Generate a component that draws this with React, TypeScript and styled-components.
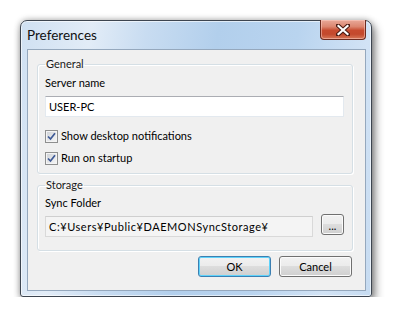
import React from "react";
import styled, { createGlobalStyle } from "styled-components";

const Global = createGlobalStyle`
  body {
    margin: 0;
    background: #ffffff;
    font-family: Lato, "Noto Sans", sans-serif;
  }
`;

const Window = styled.div`
  margin: 20px 0 0 20px;
  width: 352px;
  height: 277px;
  box-sizing: border-box;
  border: 1px solid #3d4550;
  border-radius: 7px 7px 3px 3px;
  background: linear-gradient(
    100deg,
    #cfe0f2 0%,
    #e2ecf7 18%,
    #c8dcf1 32%,
    #b2cfec 50%,
    #b9d4ef 70%,
    #d2e3f5 88%,
    #c6dbf1 100%
  );
  box-shadow: 3px 5px 10px rgba(0, 0, 0, 0.45), 0 0 6px rgba(0, 0, 0, 0.3),
    inset 0 0 0 1px rgba(255, 255, 255, 0.6);
  display: flex;
  flex-direction: column;
`;

const TitleBar = styled.div`
  height: 28px;
  display: flex;
  align-items: flex-start;
  padding-left: 6px;
`;

const Title = styled.div`
  font-size: 13.5px;
  line-height: 28px;
  color: #111;
`;

const CloseButton = styled.div`
  margin: -1px 5px 0 auto;
  width: 46px;
  height: 20px;
  box-sizing: border-box;
  border: 1px solid #6b2a1f;
  border-top: none;
  border-radius: 0 0 4px 4px;
  background: linear-gradient(
    #e9a999 0%,
    #dc8670 35%,
    #c74a2e 55%,
    #c3492d 75%,
    #d77859 100%
  );
  box-shadow: inset 0 0 0 1px rgba(255, 210, 200, 0.5);
  display: flex;
  align-items: center;
  justify-content: center;
`;

const Client = styled.div`
  flex: 1;
  margin: 0 5px 5px 6px;
  border: 1px solid #95a8bd;
  background: #f0f0f0;
  padding: 6px 12px 13px 9px;
  display: flex;
  flex-direction: column;
`;

const Group = styled.fieldset<{ $bottom: number }>`
  margin: 0;
  min-width: 0;
  border: 1px solid #d5dfe5;
  border-radius: 3px;
  box-shadow: inset 1px 1px 0 #ffffff, 1px 1px 0 #ffffff;
  padding: 0 8px ${(p) => p.$bottom}px 7px;
  display: flex;
  flex-direction: column;
  & + & {
    margin-top: 3px;
  }
`;

const Legend = styled.legend`
  padding: 0 1px;
  font-size: 11px;
  line-height: 16px;
  color: #1a1a1a;
`;

const Label = styled.div<{ $top: number }>`
  margin-top: ${(p) => p.$top}px;
  font-size: 11px;
  line-height: 16px;
  color: #000;
`;

const TextBox = styled.div<{ $readOnly?: boolean }>`
  height: 21px;
  box-sizing: border-box;
  margin-top: 4px;
  border: 1px solid ${(p) => (p.$readOnly ? "#d9d9d9" : "#e3e9ef")};
  border-top-color: ${(p) => (p.$readOnly ? "#cfcfcf" : "#abadb3")};
  background: ${(p) => (p.$readOnly ? "#f4f4f4" : "#ffffff")};
  padding: 0 3px;
  font-size: 11px;
  line-height: 19px;
  letter-spacing: ${(p) => (p.$readOnly ? "0.55px" : "0")};
  color: #000;
  white-space: nowrap;
  overflow: hidden;
  flex: 1;
`;

const CheckRow = styled.div<{ $top: number }>`
  margin-top: ${(p) => p.$top}px;
  display: flex;
  align-items: center;
  gap: 3px;
  font-size: 11px;
  line-height: 16px;
  color: #000;
`;

const Box = styled.span`
  width: 13px;
  height: 13px;
  box-sizing: border-box;
  border: 1px solid #8e8f8f;
  background: linear-gradient(135deg, #cbcfd5 0%, #e8e9eb 60%, #f6f6f6 100%);
  box-shadow: inset 0 0 0 1px #f4f4f4;
  display: flex;
  align-items: center;
  justify-content: center;
`;

const FolderRow = styled.div`
  display: flex;
  align-items: center;
  gap: 8px;
  margin-top: 1px;
`;

const Button = styled.div<{ $default?: boolean; $w: number }>`
  width: ${(p) => p.$w}px;
  height: 21px;
  box-sizing: border-box;
  border: 1px solid ${(p) => (p.$default ? "#3c7fb1" : "#707070")};
  border-radius: 3px;
  background: linear-gradient(#f2f2f2 0%, #ebebeb 50%, #dddddd 50%, #cfcfcf 100%);
  box-shadow: inset 0 0 0 1px
    ${(p) => (p.$default ? "#5fd3fb" : "#fbfbfb")};
  font-size: 11px;
  line-height: 19px;
  text-align: center;
  color: #000;
`;

const BrowseButton = styled(Button)`
  line-height: 22px;
  flex: none;
`;

const Buttons = styled.div`
  margin-top: auto;
  display: flex;
  justify-content: flex-end;
  gap: 8px;
  padding-right: 1px;
`;

const Check = () => (
  <svg width="9" height="9" viewBox="0 0 9 9">
    <path d="M1 4.5 L3.5 7 L8 1.2" fill="none" stroke="#3e5a96" strokeWidth="1.7" />
  </svg>
);

const CloseGlyph = () => (
  <svg width="14" height="12" viewBox="0 0 14 12">
    <path d="M2 1.5 L12 10.5 M12 1.5 L2 10.5" stroke="#4a1a12" strokeWidth="4.2" strokeLinecap="square" />
    <path d="M2.5 2 L11.5 10 M11.5 2 L2.5 10" stroke="#ffffff" strokeWidth="2.2" strokeLinecap="square" />
  </svg>
);

export default function App() {
  return (
    <>
      <Global />
      <Window>
        <TitleBar>
          <Title>Preferences</Title>
          <CloseButton>
            <CloseGlyph />
          </CloseButton>
        </TitleBar>
        <Client>
          <Group $bottom={7}>
            <Legend>General</Legend>
            <Label $top={3}>Server name</Label>
            <FolderRow>
              <TextBox>USER-PC</TextBox>
            </FolderRow>
            <CheckRow $top={11}>
              <Box>
                <Check />
              </Box>
              Show desktop notifications
            </CheckRow>
            <CheckRow $top={6}>
              <Box>
                <Check />
              </Box>
              Run on startup
            </CheckRow>
          </Group>
          <Group $bottom={13}>
            <Legend>Storage</Legend>
            <Label $top={2}>Sync Folder</Label>
            <FolderRow>
              <TextBox $readOnly>C:¥Users¥Public¥DAEMONSyncStorage¥</TextBox>
              <BrowseButton $w={23}>...</BrowseButton>
            </FolderRow>
          </Group>
          <Buttons>
            <Button $default $w={73}>
              OK
            </Button>
            <Button $w={73}>Cancel</Button>
          </Buttons>
        </Client>
      </Window>
    </>
  );
}
